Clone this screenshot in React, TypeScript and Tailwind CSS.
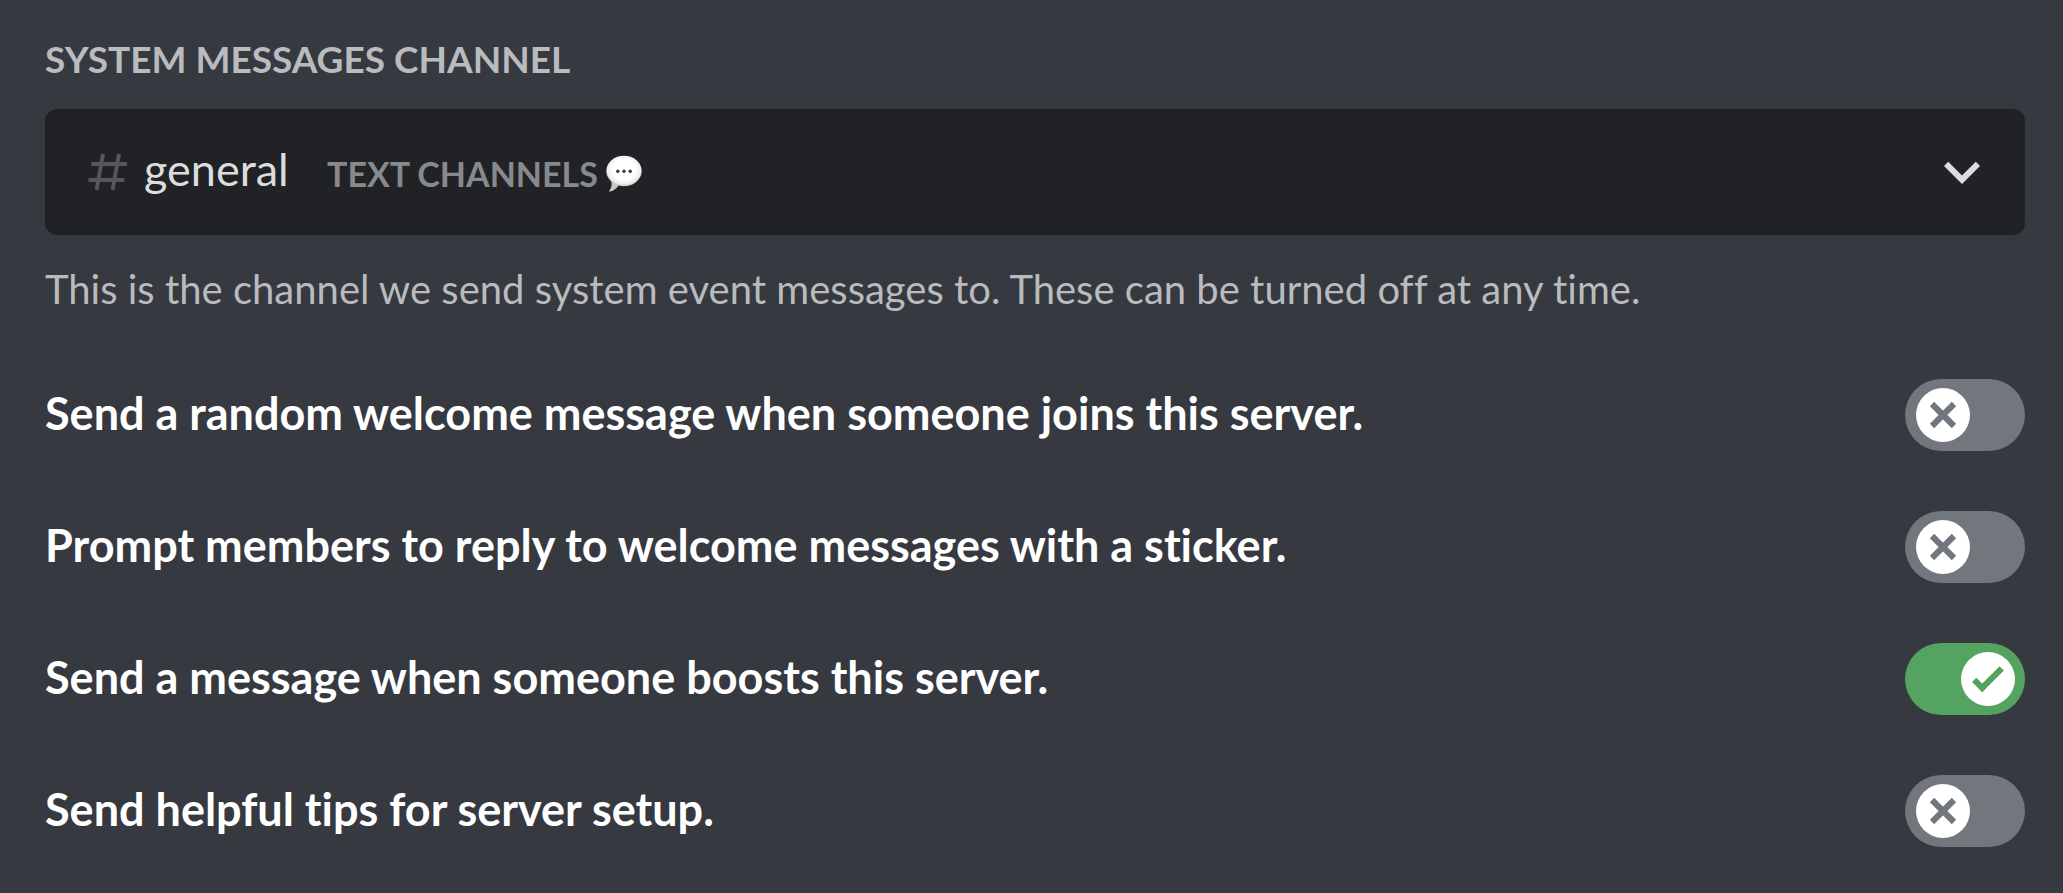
import { useId, useState } from "react";

type Setting = { label: string; enabled: boolean };

const SETTINGS: Setting[] = [
  { label: "Send a random welcome message when someone joins this server.", enabled: false },
  { label: "Prompt members to reply to welcome messages with a sticker.", enabled: false },
  { label: "Send a message when someone boosts this server.", enabled: true },
  { label: "Send helpful tips for server setup.", enabled: false },
];

function HashIcon() {
  return (
    <svg viewBox="0 0 24 24" className="size-12 shrink-0 text-[#55575a]" fill="currentColor" aria-hidden="true">
      <path
        fillRule="evenodd"
        clipRule="evenodd"
        d="M5.88657 21C5.57547 21 5.3399 20.7189 5.39427 20.4126L6.00001 17H2.59511C2.28449 17 2.04905 16.7198 2.10259 16.4138L2.27759 15.4138C2.31946 15.1746 2.52722 15 2.77011 15H6.35001L7.41001 9H4.00511C3.69449 9 3.45905 8.71977 3.51259 8.41381L3.68759 7.41381C3.72946 7.17456 3.93722 7 4.18011 7H7.76001L8.39677 3.41262C8.43914 3.17391 8.64664 3 8.88907 3H9.87344C10.1845 3 10.4201 3.28107 10.3657 3.58738L9.76001 7H15.76L16.3968 3.41262C16.4391 3.17391 16.6466 3 16.8891 3H17.8734C18.1845 3 18.4201 3.28107 18.3657 3.58738L17.76 7H21.1649C21.4755 7 21.711 7.28023 21.6574 7.58619L21.4824 8.58619C21.4406 8.82544 21.2328 9 20.9899 9H17.41L16.35 15H19.7549C20.0655 15 20.301 15.2802 20.2474 15.5862L20.0724 16.5862C20.0306 16.8254 19.8228 17 19.5799 17H16L15.3632 20.5874C15.3209 20.8261 15.1134 21 14.8709 21H13.8866C13.5755 21 13.3399 20.7189 13.3943 20.4126L14 17H8.00001L7.36325 20.5874C7.32088 20.8261 7.11337 21 6.87094 21H5.88657ZM9.41001 9L8.35001 15H14.35L15.41 9H9.41001Z"
      />
    </svg>
  );
}

function SpeechBalloon() {
  return (
    <svg viewBox="0 0 36 38" className="h-[38px] w-9 shrink-0" aria-hidden="true">
      <defs>
        <radialGradient id="balloon" cx="0.5" cy="0.45" r="0.56">
          <stop offset="0.6" stopColor="#ffffff" />
          <stop offset="0.85" stopColor="#ececec" />
          <stop offset="1" stopColor="#b9b9b9" />
        </radialGradient>
      </defs>
      <path d="M5 25C6.500 30 5 33.500 3.300 35.800C3 36.600 3.600 36.900 4.300 36.600C8.500 35.200 11.500 33 13 29.500Z" fill="#c9c9c9" />
      <ellipse cx="18" cy="16" rx="17.700" ry="15.300" fill="url(#balloon)" />
      <circle cx="11.800" cy="16.200" r="1.700" fill="#3a3a3a" />
      <circle cx="18" cy="16.200" r="1.700" fill="#3a3a3a" />
      <circle cx="24.200" cy="16.200" r="1.700" fill="#3a3a3a" />
    </svg>
  );
}

function ChevronIcon() {
  return (
    <svg viewBox="0 0 24 24" className="ml-auto size-[72px] shrink-0 text-[#dcddde]" fill="currentColor" aria-hidden="true">
      <path d="M16.59 8.59L12 13.17L7.41 8.59L6 10L12 16L18 10L16.59 8.59Z" />
    </svg>
  );
}

function SettingRow({ label, enabled }: Setting) {
  const id = useId();
  const [on, setOn] = useState(enabled);
  return (
    <div className="flex items-center justify-between gap-6">
      <label htmlFor={id} className="pb-1 text-[45px] leading-[60px] font-bold text-white">
        {label}
      </label>
      <div className="grid shrink-0 items-center">
        <input
          id={id}
          type="checkbox"
          role="switch"
          checked={on}
          onChange={(event) => setOn(event.target.checked)}
          className="col-start-1 row-start-1 h-[72px] w-[120px] cursor-pointer appearance-none rounded-full bg-[#72767d] checked:bg-[#55a360]"
        />
        <span
          className={
            on
              ? "pointer-events-none col-start-1 row-start-1 mr-[10px] size-[54px] justify-self-end rounded-full bg-white text-[#55a360]"
              : "pointer-events-none col-start-1 row-start-1 ml-[11px] size-[54px] rounded-full bg-white text-[#72767d]"
          }
        >
          <svg viewBox="0 0 20 20" className="size-full" fill="currentColor" aria-hidden="true">
            {on ? (
              <>
                <path d="M7.89561 14.8538L6.30462 13.2629L14.3099 5.25755L15.9009 6.84854L7.89561 14.8538Z" />
                <path d="M4.08643 11.0903L5.67742 9.49929L9.4485 13.2704L7.85751 14.8614L4.08643 11.0903Z" />
              </>
            ) : (
              <>
                <path d="M5.13231 6.72963L6.7233 5.13864L14.855 13.2704L13.264 14.8614L5.13231 6.72963Z" />
                <path d="M13.2704 5.13864L14.8614 6.72963L6.72963 14.8614L5.13864 13.2704L13.2704 5.13864Z" />
              </>
            )}
          </svg>
        </span>
      </div>
    </div>
  );
}

export default function App() {
  return (
    <main className="min-h-screen bg-[#36393f] pt-[35px] pr-[38px] pb-11 pl-[45px] font-['Lato',sans-serif] [font-variant-ligatures:none]">
      <label htmlFor="channel" className="block text-[37px] leading-[48px] font-bold text-[#b9bbbe] uppercase">
        System messages channel
      </label>

      <div className="mt-[26px] grid items-center">
        <select
          id="channel"
          defaultValue="general"
          className="col-start-1 row-start-1 h-[126px] w-full cursor-pointer appearance-none rounded-xl bg-[#202225] pb-1 pl-[99px] text-[45px] text-[#dcddde]"
        >
          <option value="general">general</option>
        </select>
        <div className="pointer-events-none col-start-1 row-start-1 flex items-center pr-[27px] pl-[39px]">
          <HashIcon />
          <span className="ml-[195px] pt-1 text-[34px] leading-[48px] font-bold text-[#87898c] uppercase">
            Text channels
          </span>
          <span className="ml-2 pt-1">
            <SpeechBalloon />
          </span>
          <ChevronIcon />
        </div>
      </div>

      <p className="mt-6 text-[40px] leading-[60px] text-[#b9bbbe]">
        This is the channel we send system event messages to. These can be turned off at any time.
      </p>

      <div className="mt-[60px] flex flex-col gap-[60px]">
        {SETTINGS.map((setting) => (
          <SettingRow key={setting.label} {...setting} />
        ))}
      </div>
    </main>
  );
}
